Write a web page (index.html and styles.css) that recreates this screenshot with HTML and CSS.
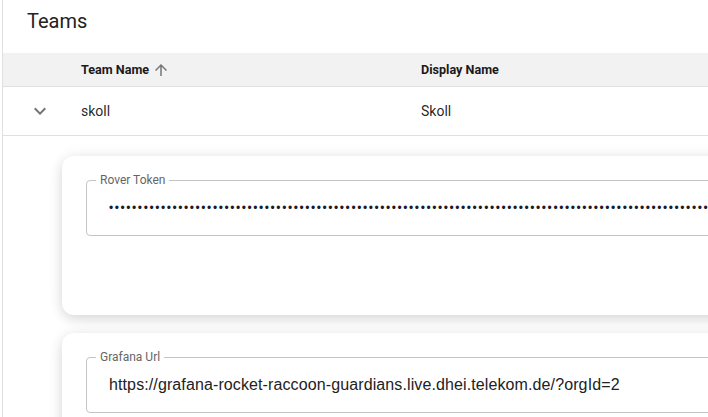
FILE: index.html
```html
<!DOCTYPE html>
<html lang="en">
<head>
<meta charset="utf-8">
<title>Teams</title>
<link rel="stylesheet" href="styles.css">
</head>
<body>
<div class="page">
  <h1 class="title">Teams</h1>
  <div class="table">
    <div class="row head">
      <div class="cell"></div>
      <div class="cell"><span>Team Name</span>
        <svg class="sort" viewBox="0 0 24 24" width="18" height="18"><path d="M4 12l1.41 1.41L11 7.83V20h2V7.83l5.58 5.59L20 12l-8-8-8 8z"/></svg>
      </div>
      <div class="cell">Display Name</div>
    </div>
    <div class="row body">
      <div class="cell expander">
        <svg viewBox="0 0 24 24" width="24" height="24"><path d="M16.59 8.59 12 13.17 7.41 8.59 6 10l6 6 6-6z"/></svg>
      </div>
      <div class="cell">skoll</div>
      <div class="cell">Skoll</div>
    </div>
  </div>
  <div class="detail">
    <div class="card">
      <fieldset class="field">
        <legend>Rover Token</legend>
        <div class="value dots">••••••••••••••••••••••••••••••••••••••••••••••••••••••••••••••••••••••••••••••••••••••••••••••••••••••••••••••••••••••••••••••••••••••••••••••••••••</div>
      </fieldset>
    </div>
    <div class="card">
      <fieldset class="field">
        <legend>Grafana Url</legend>
        <div class="value">https://grafana-rocket-raccoon-guardians.live.dhei.telekom.de/?orgId=2</div>
      </fieldset>
    </div>
  </div>
</div>
</body>
</html>
```
FILE: styles.css
```css
html, body {
  margin: 0;
  padding: 0;
  background: #fff;
  overflow: hidden;
}
body {
  font-family: Roboto, "Liberation Sans", sans-serif;
  color: rgba(0,0,0,0.87);
}
.page {
  margin-left: 2px;
  width: 1000px;
  min-height: 417px;
  border-left: 1px solid #e0e0e0;
}
.title {
  margin: 0;
  height: 53px;
  box-sizing: border-box;
  padding: 9px 0 0 24px;
  font-size: 20px;
  font-weight: 400;
  line-height: 24px;
  color: #222;
}
.row {
  display: grid;
  grid-template-columns: 62px 340px 1fr;
  border-bottom: 1px solid #e0e0e0;
}
.row.head {
  height: 33px;
  background: #f2f2f2;
  font-size: 12.6px;
  font-weight: 700;
  color: #1a1a1a;
}
.row.body {
  height: 48px;
  font-size: 14px;
}
.cell {
  display: flex;
  align-items: center;
  padding-left: 16px;
}
.sort {
  fill: #757575;
  margin-left: 3px;
}
.expander {
  padding-left: 25px;
}
.expander svg {
  fill: #757575;
}
.detail {
  padding: 20px 0 0 59px;
  display: flex;
  flex-direction: column;
  gap: 18px;
}
.card {
  background: #fff;
  border-radius: 12px;
  box-shadow: 0 4px 12px rgba(0,0,0,0.13), 0 0 18px rgba(0,0,0,0.05);
  padding: 18px 24px 79px 24px;
}
.field {
  margin: 0;
  border: 1px solid #c4c4c4;
  border-radius: 4px;
  padding: 0 0 0 9px;
  height: 62px;
  box-sizing: border-box;
  min-width: 0;
  display: flex;
  align-items: center;
}
.field legend {
  font-size: 12px;
  color: #666;
  padding: 0 4px;
  margin: 0;
  line-height: 12px;
}
.value {
  font-family: "Liberation Sans", Arial, sans-serif;
  font-size: 16px;
  letter-spacing: 0.11px;
  color: #222;
  white-space: nowrap;
  overflow: hidden;
  margin: -6px 0 0 13px;
}
.dots {
  font-size: 12px;
  letter-spacing: 1.57px;
  color: #1a1a2a;
}
```
